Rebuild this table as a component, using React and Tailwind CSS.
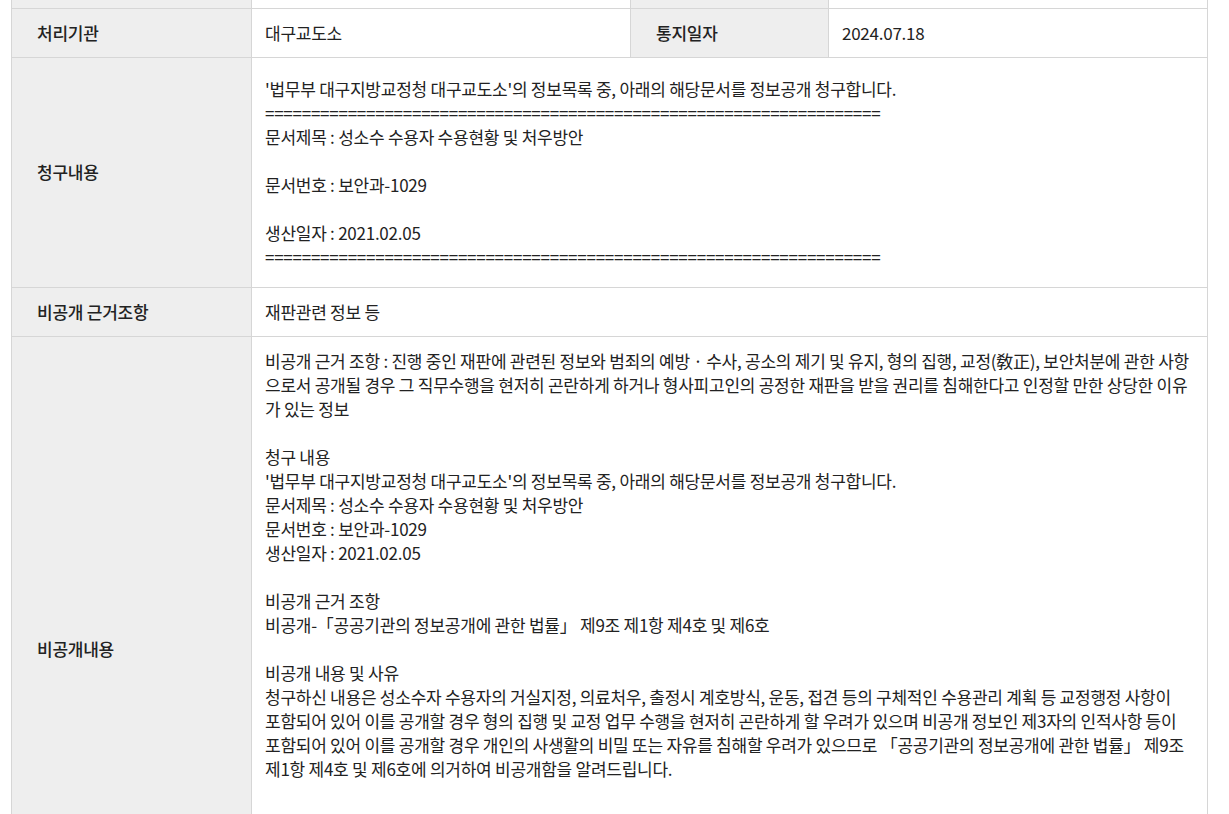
const border = 'border border-[#d6d6d6]'
const label = `${border} bg-[#eeeeee] pl-[25px] pr-3 align-middle font-medium text-[#222]`
const value = `${border} pl-[13px] pr-3 align-top text-[#222]`

const requestLines = [
    "'법무부 대구지방교정청 대구교도소'의 정보목록 중, 아래의 해당문서를 정보공개 청구합니다.",
    '='.repeat(67),
    '문서제목 : 성소수 수용자 수용현황 및 처우방안',
    '',
    '문서번호 : 보안과-1029',
    '',
    '생산일자 : 2021.02.05',
    '='.repeat(67),
]

const reasonLines = [
    '비공개 근거 조항 : 진행 중인 재판에 관련된 정보와 범죄의 예방 · 수사, 공소의 제기 및 유지, 형의 집행, 교정(敎正), 보안처분에 관한 사항',
    '으로서 공개될 경우 그 직무수행을 현저히 곤란하게 하거나 형사피고인의 공정한 재판을 받을 권리를 침해한다고 인정할 만한 상당한 이유',
    '가 있는 정보',
    '',
    '청구 내용',
    "'법무부 대구지방교정청 대구교도소'의 정보목록 중, 아래의 해당문서를 정보공개 청구합니다.",
    '문서제목 : 성소수 수용자 수용현황 및 처우방안',
    '문서번호 : 보안과-1029',
    '생산일자 : 2021.02.05',
    '',
    '비공개 근거 조항',
    '비공개-「공공기관의 정보공개에 관한 법률」 제9조 제1항 제4호 및 제6호',
    '',
    '비공개 내용 및 사유',
    '청구하신 내용은 성소수자 수용자의 거실지정, 의료처우, 출정시 계호방식, 운동, 접견 등의 구체적인 수용관리 계획 등 교정행정 사항이',
    '포함되어 있어 이를 공개할 경우 형의 집행 및 교정 업무 수행을 현저히 곤란하게 할 우려가 있으며 비공개 정보인 제3자의 인적사항 등이',
    '포함되어 있어 이를 공개할 경우 개인의 사생활의 비밀 또는 자유를 침해할 우려가 있으므로 「공공기관의 정보공개에 관한 법률」 제9조',
    '제1항 제4호 및 제6호에 의거하여 비공개함을 알려드립니다.',
]

const Lines = ({ lines }) => (
    <div>
        {lines.map((line, i) => (
            <div key={i} className="whitespace-nowrap h-[24px]">
                {line}
            </div>
        ))}
    </div>
)

export default function App() {
    return (
        <div
            className="bg-white min-h-screen pl-[11px] text-[17px] leading-[24px] tracking-[-0.25px]"
            style={{ fontFamily: '"Noto Sans CJK KR", "Noto Sans", sans-serif' }}
        >
            <table className="table-fixed border-collapse w-[1196px]">
                <colgroup>
                    <col className="w-[240px]" />
                    <col className="w-[379px]" />
                    <col className="w-[198px]" />
                    <col className="w-[379px]" />
                </colgroup>
                <tbody>
                    {/* previous row, cut off at the top */}
                    <tr className="h-[8px]">
                        <td className={`${label} border-t-0 p-0`}></td>
                        <td className={`${value} border-t-0 p-0`}></td>
                        <td className={`${label} border-t-0 p-0`}></td>
                        <td className={`${value} border-t-0 p-0`}></td>
                    </tr>
                    <tr>
                        <td className={`${label} py-3`}>처리기관</td>
                        <td className={`${value} py-3 align-middle`}>대구교도소</td>
                        <td className={`${label} py-3`}>통지일자</td>
                        <td className={`${value} py-3 align-middle`}>2024.07.18</td>
                    </tr>
                    <tr>
                        <td className={label}>청구내용</td>
                        <td colSpan={3} className={`${value} pt-[19px] pb-[18px]`}>
                            <Lines lines={requestLines} />
                        </td>
                    </tr>
                    <tr>
                        <td className={`${label} py-3`}>비공개 근거조항</td>
                        <td colSpan={3} className={`${value} py-3 align-middle`}>
                            재판관련 정보 등
                        </td>
                    </tr>
                    <tr className="h-[626px]">
                        <td className={label}>비공개내용</td>
                        <td colSpan={3} className={`${value} pt-3`}>
                            <Lines lines={reasonLines} />
                        </td>
                    </tr>
                </tbody>
            </table>
        </div>
    )
}
